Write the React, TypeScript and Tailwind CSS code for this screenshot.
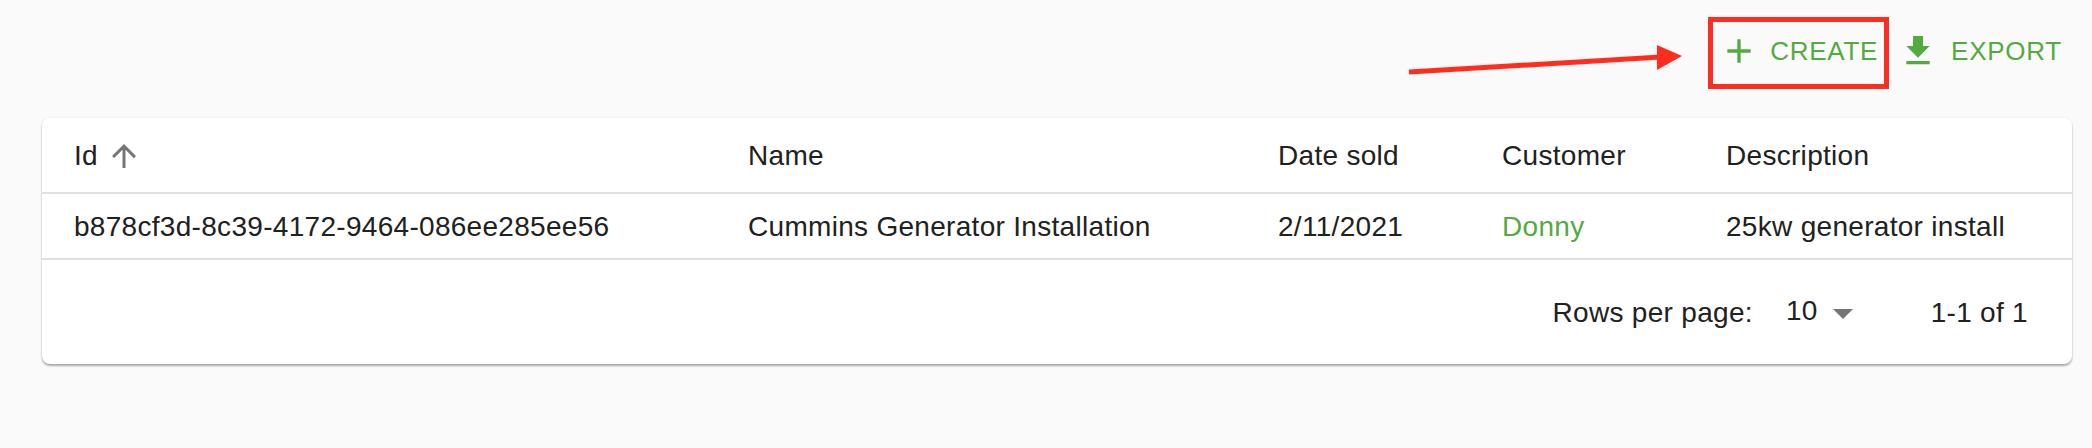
import React from 'react';

const green = 'text-[#53ab40]';

const AddIcon = () => (
  <svg viewBox="0 0 24 24" className="w-[40px] h-[40px] fill-current">
    <path d="M19 13h-6v6h-2v-6H5v-2h6V5h2v6h6v2z" />
  </svg>
);

const DownloadIcon = () => (
  <svg viewBox="0 0 24 24" className="w-[40px] h-[40px] fill-current">
    <path d="M19 9h-4V3H9v6H5l7 7 7-7zM5 18v2h14v-2H5z" />
  </svg>
);

const SortIcon = () => (
  <svg viewBox="0 0 24 24" className="w-[36px] h-[36px] fill-[#757575]">
    <path d="M4 12l1.41 1.41L11 7.83V20h2V7.83l5.58 5.59L20 12l-8-8-8 8z" />
  </svg>
);

// red annotation drawn on top of the screenshot
const Annotation = () => (
  <>
    <div className="absolute left-[1708px] top-[17px] w-[181px] h-[72px] border-[5px] border-[#ff2d20]" />
    <svg className="absolute left-[1405px] top-[40px]" width="285" height="36" viewBox="0 0 285 36">
      <path d="M4 32 L256 17" stroke="#ff2d20" strokeWidth="5" fill="none" />
      <path d="M252 5 L277 16 L252 30 z" fill="#ff2d20" />
    </svg>
  </>
);

const cols = ['Name', 'Date sold', 'Customer', 'Description'];

export default function App() {
  return (
    <div className="relative w-[2092px] h-[448px] bg-[#fafafa] overflow-hidden text-[28px] tracking-[0.3px] text-[#212121] font-['Liberation_Sans',Arial,sans-serif]">
      <Annotation />

      <div className="flex justify-end items-center h-[118px] pb-[16px] pr-[30px]">
        <button className={`flex items-center text-[26px] tracking-[0.74px] ${green}`}>
          <AddIcon />
          <span className="ml-[11px]">CREATE</span>
        </button>
        <button className={`flex items-center ml-[20px] text-[26px] tracking-[0.74px] ${green}`}>
          <DownloadIcon />
          <span className="ml-[13px]">EXPORT</span>
        </button>
      </div>

      <div className="ml-[42px] mr-[20px] bg-white rounded-[8px] shadow-[0_2px_2px_rgba(0,0,0,0.3),0_0_3px_rgba(0,0,0,0.08)]">
        <table className="w-full table-fixed text-left">
          <colgroup>
            <col className="w-[673px]" />
            <col className="w-[530px]" />
            <col className="w-[224px]" />
            <col className="w-[224px]" />
            <col />
          </colgroup>
          <thead>
            <tr className="h-[75px] border-b-2 border-[#e0e0e0]">
              <th className="pl-[32px] pt-[1px] font-normal">
                <span className="flex items-center gap-[8px]">
                  Id <SortIcon />
                </span>
              </th>
              {cols.map((c) => (
                <th key={c} className="pl-[33px] pt-[1px] font-normal">{c}</th>
              ))}
            </tr>
          </thead>
          <tbody>
            <tr className="h-[66px] border-b-2 border-[#e0e0e0]">
              <td className="pl-[32px] pt-[2px]">b878cf3d-8c39-4172-9464-086ee285ee56</td>
              <td className="pl-[33px] pt-[2px]">Cummins Generator Installation</td>
              <td className="pl-[33px] pt-[2px]">2/11/2021</td>
              <td className={`pl-[33px] pt-[2px] ${green}`}>Donny</td>
              <td className="pl-[33px] pt-[2px]">25kw generator install</td>
            </tr>
          </tbody>
        </table>
        <div className="flex items-center justify-end h-[104px] pt-[2px] pr-[44px]">
          <span>Rows per page:</span>
          <span className="ml-[33px] mb-[5px]">10</span>
          <svg viewBox="0 0 24 24" className="w-[48px] h-[48px] ml-[1px] fill-[#757575]">
            <path d="M7 10l5 5 5-5z" />
          </svg>
          <span className="ml-[64px]">1-1 of 1</span>
        </div>
      </div>
    </div>
  );
}
